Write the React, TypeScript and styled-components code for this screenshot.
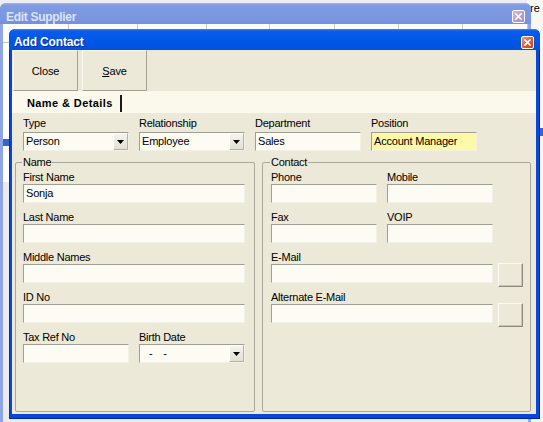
import React from 'react';
import styled, { createGlobalStyle } from 'styled-components';

const FONT = `"Liberation Sans", Arial, sans-serif`;

const Global = createGlobalStyle`
  html, body { margin: 0; padding: 0; }
  body {
    width: 543px; height: 422px; overflow: hidden;
    background: #eeeef2;
    font-family: ${FONT};
    color: #000;
  }
`;

const Desktop = styled.div`
  position: relative;
  width: 543px;
  height: 422px;
  overflow: hidden;
  background: #eeeef2;
  font-family: ${FONT};
`;

/* ---------- window behind everything (right edge) ---------- */
const BackWindow = styled.div`
  position: absolute;
  left: 527px;
  top: 0;
  width: 20px;
  height: 422px;
  background: #f7f7f3;
  display: flex;
  flex-direction: column;
`;
const BackText = styled.div`
  font-size: 11px;
  line-height: 13px;
  padding: 2px 0 0 3px;
  color: #000;
`;
const BackSelected = styled.div`
  margin-top: 113px;
  height: 8px;
  background: #3169c6;
`;

/* ---------- Edit Supplier (inactive window) ---------- */
const EditWindow = styled.div`
  position: absolute;
  left: 0;
  top: 3px;
  width: 531px;
  height: 440px;
  display: flex;
  flex-direction: column;
  background: #8ea6e8;
  border-radius: 6px 6px 0 0;
`;
const InactiveTitleBar = styled.div`
  flex: none;
  height: 21px;
  box-sizing: border-box;
  display: flex;
  align-items: flex-start;
  justify-content: space-between;
  padding: 7px 6px 0 6px;
  border-radius: 6px 6px 0 0;
  background: linear-gradient(#a6b9ef 0, #7f9be2 2px, #7a96df 75%, #7490dc 100%);
`;
const InactiveTitle = styled.div`
  font-weight: bold;
  font-size: 12px;
  line-height: 14px;
  letter-spacing: -0.3px;
  color: #dbe4f8;
`;
const EditBody = styled.div`
  flex: 1;
  margin: 0 3px;
  background: #ffffff;
  display: flex;
  flex-direction: column;
`;
const GridHeader = styled.div`
  flex: none;
  height: 18px;
  display: flex;
  background: #fbfbf9;
  border-bottom: 1px solid #c8c5b5;
`;
const HeaderCell = styled.div<{ $w: number }>`
  flex: none;
  width: ${(p) => p.$w}px;
  box-sizing: border-box;
  border-right: 1px solid #c9c6b7;
  border-left: 1px solid #ffffff;
`;
const GridMark = styled.div<{ $top: number; $h: number; $c: string; $w?: number }>`
  margin-top: ${(p) => p.$top}px;
  margin-left: ${(p) => (p.$w ? 6 - p.$w + 3 : 0)}px;
  width: ${(p) => (p.$w ? `${p.$w}px` : '100%')};
  height: ${(p) => p.$h}px;
  background: ${(p) => p.$c};
`;

/* ---------- Add Contact dialog ---------- */
const Dialog = styled.div`
  position: absolute;
  left: 9px;
  top: 29px;
  width: 531px;
  height: 390px;
  display: flex;
  flex-direction: column;
  border-radius: 6px 6px 0 0;
  overflow: hidden;
  background: #0846d8;
`;
const TitleBar = styled.div`
  flex: none;
  height: 21px;
  box-sizing: border-box;
  display: flex;
  align-items: flex-start;
  justify-content: space-between;
  padding: 6px 6px 0 5px;
  background: linear-gradient(#3a86f8 0, #0a5ce9 2px, #0058e6 50%, #0051df 100%);
`;
const Title = styled.div`
  font-weight: bold;
  font-size: 12px;
  line-height: 14px;
  letter-spacing: -0.15px;
  color: #ffffff;
  text-shadow: 1px 1px 0 #0b2d9c;
`;
const CloseBox = styled.div<{ $inactive?: boolean }>`
  width: 13px;
  height: 13px;
  box-sizing: border-box;
  border: 1px solid #ffffff;
  border-radius: 2px;
  display: flex;
  align-items: center;
  justify-content: center;
  margin-top: ${(p) => (p.$inactive ? 0 : 1)}px;
  background: ${(p) =>
    p.$inactive
      ? 'linear-gradient(135deg, #d0bce0 0%, #b69bd0 60%, #a98ccb 100%)'
      : 'linear-gradient(135deg, #f29a78 0%, #e05a32 55%, #c8441c 100%)'};
`;
const Frame = styled.div`
  flex: 1;
  display: flex;
  min-height: 0;
  padding: 0 4px 5px 3px;
  background: #0a46d9;
  box-shadow: inset 1px 0 0 #0030b4, inset -1px -1px 0 #0027a0;
`;
const Client = styled.div`
  flex: 1;
  display: flex;
  flex-direction: column;
  min-height: 0;
  background: #ece9d8;
`;
const Toolbar = styled.div`
  flex: none;
  height: 41px;
  display: flex;
  gap: 4px;
  padding-left: 1px;
`;
const ToolButton = styled.div`
  width: 65px;
  height: 41px;
  box-sizing: border-box;
  display: flex;
  align-items: center;
  justify-content: center;
  background: #ece9d8;
  border: 1px solid;
  border-color: #f8f7f0 #a3a092 #a3a092 #f8f7f0;
  font-size: 11px;
  letter-spacing: -0.1px;
  u { text-decoration: underline; }
`;
const TabStrip = styled.div`
  flex: none;
  height: 22px;
  box-sizing: border-box;
  display: flex;
  align-items: flex-start;
  padding: 4px 0 0 8px;
  background: #fbf9ec;
`;
const Tab = styled.div`
  height: 17px;
  padding: 0 7px;
  border-right: 2px solid #1a1a1a;
  font-weight: bold;
  font-size: 11px;
  line-height: 17px;
  letter-spacing: 0.4px;
  white-space: nowrap;
`;
const Form = styled.div`
  flex: 1;
  display: flex;
  flex-direction: column;
  min-height: 0;
`;
const TopRow = styled.div`
  flex: none;
  display: grid;
  grid-template-columns: repeat(4, 106px);
  column-gap: 10px;
  padding: 4px 0 0 11px;
`;
const GroupsRow = styled.div`
  flex: 1;
  min-height: 0;
  display: grid;
  grid-template-columns: 240px 269px;
  column-gap: 7px;
  margin: 5px 4px 2px 3px;
`;
const Group = styled.fieldset<{ $pl: number; $pr: number }>`
  margin: 0;
  min-width: 0;
  box-sizing: border-box;
  border: 1px solid #aca899;
  border-radius: 2px;
  padding: 2px ${(p) => p.$pr}px 0 ${(p) => p.$pl}px;
  display: flex;
  flex-direction: column;
  gap: 8px;
`;
const Legend = styled.legend`
  padding: 0 1px;
  margin-left: -1px;
  font-size: 11px;
  line-height: 13px;
  letter-spacing: -0.25px;
`;
const Field = styled.div<{ $gap?: number }>`
  display: flex;
  flex-direction: column;
  gap: ${(p) => p.$gap ?? 0}px;
  min-width: 0;
`;
const Label = styled.div`
  height: 13px;
  font-size: 11px;
  line-height: 13px;
  letter-spacing: -0.25px;
  white-space: nowrap;
`;
const PairRow = styled.div`
  display: grid;
  grid-template-columns: 106px 106px;
  column-gap: 10px;
`;
const Edit = styled.div<{ $w?: number; $bg?: string }>`
  box-sizing: border-box;
  width: ${(p) => (p.$w ? `${p.$w}px` : '100%')};
  height: 19px;
  flex: none;
  padding: 0 2px;
  background: ${(p) => p.$bg ?? '#fcfcf4'};
  border-top: 1px solid #a19f92;
  border-left: 1px solid #a19f92;
  border-right: 1px solid #f3f1e4;
  border-bottom: 1px solid #f3f1e4;
  font-size: 11px;
  line-height: 17px;
  letter-spacing: -0.2px;
  white-space: nowrap;
  overflow: hidden;
`;
const Combo = styled.div`
  box-sizing: border-box;
  height: 19px;
  display: flex;
  background: #fcfcf4;
  border-top: 1px solid #a19f92;
  border-left: 1px solid #a19f92;
  border-right: 1px solid #f3f1e4;
  border-bottom: 1px solid #f3f1e4;
`;
const ComboText = styled.div<{ $pl?: number }>`
  flex: 1;
  padding-left: ${(p) => p.$pl ?? 2}px;
  font-size: 11px;
  line-height: 17px;
  letter-spacing: -0.2px;
  word-spacing: 8px;
  white-space: pre;
  overflow: hidden;
`;
const DropButton = styled.div`
  flex: none;
  width: 15px;
  height: 17px;
  box-sizing: border-box;
  display: flex;
  align-items: center;
  justify-content: center;
  padding-top: 1px;
  background: linear-gradient(#f4f3ee, #e3e0d2);
  border: 1px solid;
  border-color: #ffffff #b5b2a3 #b5b2a3 #ffffff;
`;
const EmailRow = styled.div`
  display: flex;
  align-items: flex-start;
  gap: 5px;
`;
const SideButton = styled.div`
  flex: none;
  width: 25px;
  height: 24px;
  box-sizing: border-box;
  margin: -1px 0 -4px 0;
  background: #ece9d8;
  border: 1px solid;
  border-color: #fbfaf5 #8e8b7e #8e8b7e #fbfaf5;
  box-shadow: inset -1px -1px 0 #c8c5b6;
`;

const XGlyph = () => (
  <svg width="7" height="7" viewBox="0 0 7 7">
    <path d="M1 1 L6 6 M6 1 L1 6" stroke="#fff" strokeWidth="1.7" strokeLinecap="square" />
  </svg>
);

const Arrow = () => (
  <svg width="7" height="4" viewBox="0 0 7 4">
    <polygon points="0,0 7,0 3.5,4" fill="#000" />
  </svg>
);

const ComboField = ({ value, pl }: { value: string; pl?: number }) => (
  <Combo>
    <ComboText $pl={pl}>{value}</ComboText>
    <DropButton>
      <Arrow />
    </DropButton>
  </Combo>
);

const headerCols = [66, 69, 69, 63, 65, 64, 64, 65];

export default function App() {
  return (
    <Desktop>
      <Global />
      <BackWindow>
        <BackText>re</BackText>
        <BackSelected />
      </BackWindow>

      <EditWindow>
        <InactiveTitleBar>
          <InactiveTitle>Edit Supplier</InactiveTitle>
          <CloseBox $inactive>
            <XGlyph />
          </CloseBox>
        </InactiveTitleBar>
        <EditBody>
          <GridHeader>
            {headerCols.map((w, i) => (
              <HeaderCell key={i} $w={w} />
            ))}
          </GridHeader>
          <GridMark $top={96} $h={7} $c="#3169c6" />
          <GridMark $top={24} $h={12} $c="#8c8a80" $w={2} />
          <GridMark $top={0} $h={260} $c="#ecebe6" />
        </EditBody>
      </EditWindow>

      <Dialog>
        <TitleBar>
          <Title>Add Contact</Title>
          <CloseBox>
            <XGlyph />
          </CloseBox>
        </TitleBar>
        <Frame>
          <Client>
            <Toolbar>
              <ToolButton>Close</ToolButton>
              <ToolButton>
                <span>
                  <u>S</u>ave
                </span>
              </ToolButton>
            </Toolbar>
            <TabStrip>
              <Tab>Name &amp; Details</Tab>
            </TabStrip>
            <Form>
              <TopRow>
                <Field $gap={2}>
                  <Label>Type</Label>
                  <ComboField value="Person" />
                </Field>
                <Field $gap={2}>
                  <Label>Relationship</Label>
                  <ComboField value="Employee" />
                </Field>
                <Field $gap={2}>
                  <Label>Department</Label>
                  <Edit>Sales</Edit>
                </Field>
                <Field $gap={2}>
                  <Label>Position</Label>
                  <Edit $bg="#fef9a9">Account Manager</Edit>
                </Field>
              </TopRow>
              <GroupsRow>
                <Group $pl={7} $pr={9}>
                  <Legend>Name</Legend>
                  <Field>
                    <Label>First Name</Label>
                    <Edit>Sonja</Edit>
                  </Field>
                  <Field>
                    <Label>Last Name</Label>
                    <Edit />
                  </Field>
                  <Field>
                    <Label>Middle Names</Label>
                    <Edit />
                  </Field>
                  <Field>
                    <Label>ID No</Label>
                    <Edit />
                  </Field>
                  <PairRow>
                    <Field>
                      <Label>Tax Ref No</Label>
                      <Edit />
                    </Field>
                    <Field>
                      <Label>Birth Date</Label>
                      <ComboField value="- -" pl={9} />
                    </Field>
                  </PairRow>
                </Group>
                <Group $pl={8} $pr={0}>
                  <Legend>Contact</Legend>
                  <PairRow>
                    <Field>
                      <Label>Phone</Label>
                      <Edit />
                    </Field>
                    <Field>
                      <Label>Mobile</Label>
                      <Edit />
                    </Field>
                  </PairRow>
                  <PairRow>
                    <Field>
                      <Label>Fax</Label>
                      <Edit />
                    </Field>
                    <Field>
                      <Label>VOIP</Label>
                      <Edit />
                    </Field>
                  </PairRow>
                  <Field>
                    <Label>E-Mail</Label>
                    <EmailRow>
                      <Edit $w={222} />
                      <SideButton />
                    </EmailRow>
                  </Field>
                  <Field>
                    <Label>Alternate E-Mail</Label>
                    <EmailRow>
                      <Edit $w={222} />
                      <SideButton />
                    </EmailRow>
                  </Field>
                </Group>
              </GroupsRow>
            </Form>
          </Client>
        </Frame>
      </Dialog>
    </Desktop>
  );
}
